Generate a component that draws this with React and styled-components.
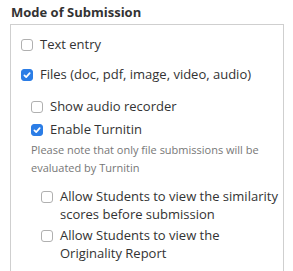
import React from "react";
import styled, { createGlobalStyle } from "styled-components";

const GlobalStyle = createGlobalStyle`
  html, body {
    margin: 0;
    padding: 0;
    background: #fff;
  }
  body {
    font-family: "Open Sans", "Noto Sans", sans-serif;
    color: #333;
    overflow: hidden;
  }
`;

export default function App() {
  return (
    <Page>
      <GlobalStyle />
      <Title>Mode of Submission</Title>
      <Panel>
        <Option top={9}>
          <Box />
          <Label>Text entry</Label>
        </Option>
        <Option top={10}>
          <Box checked>
            <Tick />
          </Box>
          <Label>Files (doc, pdf, image, video, audio)</Label>
        </Option>
        <Nested>
          <Option top={12}>
            <Box />
            <Label>Show audio recorder</Label>
          </Option>
          <Option top={3}>
            <Box checked>
              <Tick />
            </Box>
            <Label>Enable Turnitin</Label>
          </Option>
          <Note>Please note that only file submissions will be evaluated by Turnitin</Note>
          <Nested>
            <Option top={10} multi>
              <Box multi />
              <Label>Allow Students to view the similarity scores before submission</Label>
            </Option>
            <Option top={3} multi>
              <Box multi />
              <Label>Allow Students to view the Originality Report</Label>
            </Option>
          </Nested>
        </Nested>
      </Panel>
    </Page>
  );
}

function Tick() {
  return (
    <svg width="10" height="10" viewBox="0 0 10 10">
      <path d="M2.4 5.3 L4.2 7.1 L7.7 3.1" fill="none" stroke="#fff" strokeWidth="1.7" strokeLinecap="round" strokeLinejoin="round" />
    </svg>
  );
}

const Page = styled.div`
  padding: 2px 10px 0 10px;
  width: 274px;
  height: 269px;
  overflow: hidden;
`;

const Title = styled.div`
  font-size: 13px;
  font-weight: 700;
  line-height: 20px;
  padding-left: 1px;
  color: #333;
  margin-bottom: 2px;
`;

const Panel = styled.div`
  border: 1px solid #cfcfcf;
  border-bottom: none;
  height: 247px;
  box-sizing: border-box;
  padding: 0 0 0 10px;
  display: flex;
  flex-direction: column;
`;

const Nested = styled.div`
  display: flex;
  flex-direction: column;
  padding-left: 10px;
`;

const Option = styled.label`
  display: flex;
  align-items: flex-start;
  gap: 7px;
  margin-top: ${(p) => p.top}px;
  font-size: 13px;
  line-height: ${(p) => (p.multi ? 18 : 20)}px;
  color: #333;
  padding-right: 2px;
`;

const Box = styled.span`
  flex: none;
  width: 12px;
  height: 12px;
  box-sizing: border-box;
  margin-top: ${(p) => (p.multi ? 4 : 5)}px;
  border-radius: 3px;
  border: 1px solid ${(p) => (p.checked ? "#2b7de6" : "#b0b0b0")};
  background: ${(p) => (p.checked ? "#2b7de6" : "#fff")};
  display: flex;
  align-items: center;
  justify-content: center;
`;

const Label = styled.span``;

const Note = styled.div`
  margin-top: 2px;
  font-size: 11px;
  line-height: 18px;
  color: #777;
  padding-right: 2px;
`;
